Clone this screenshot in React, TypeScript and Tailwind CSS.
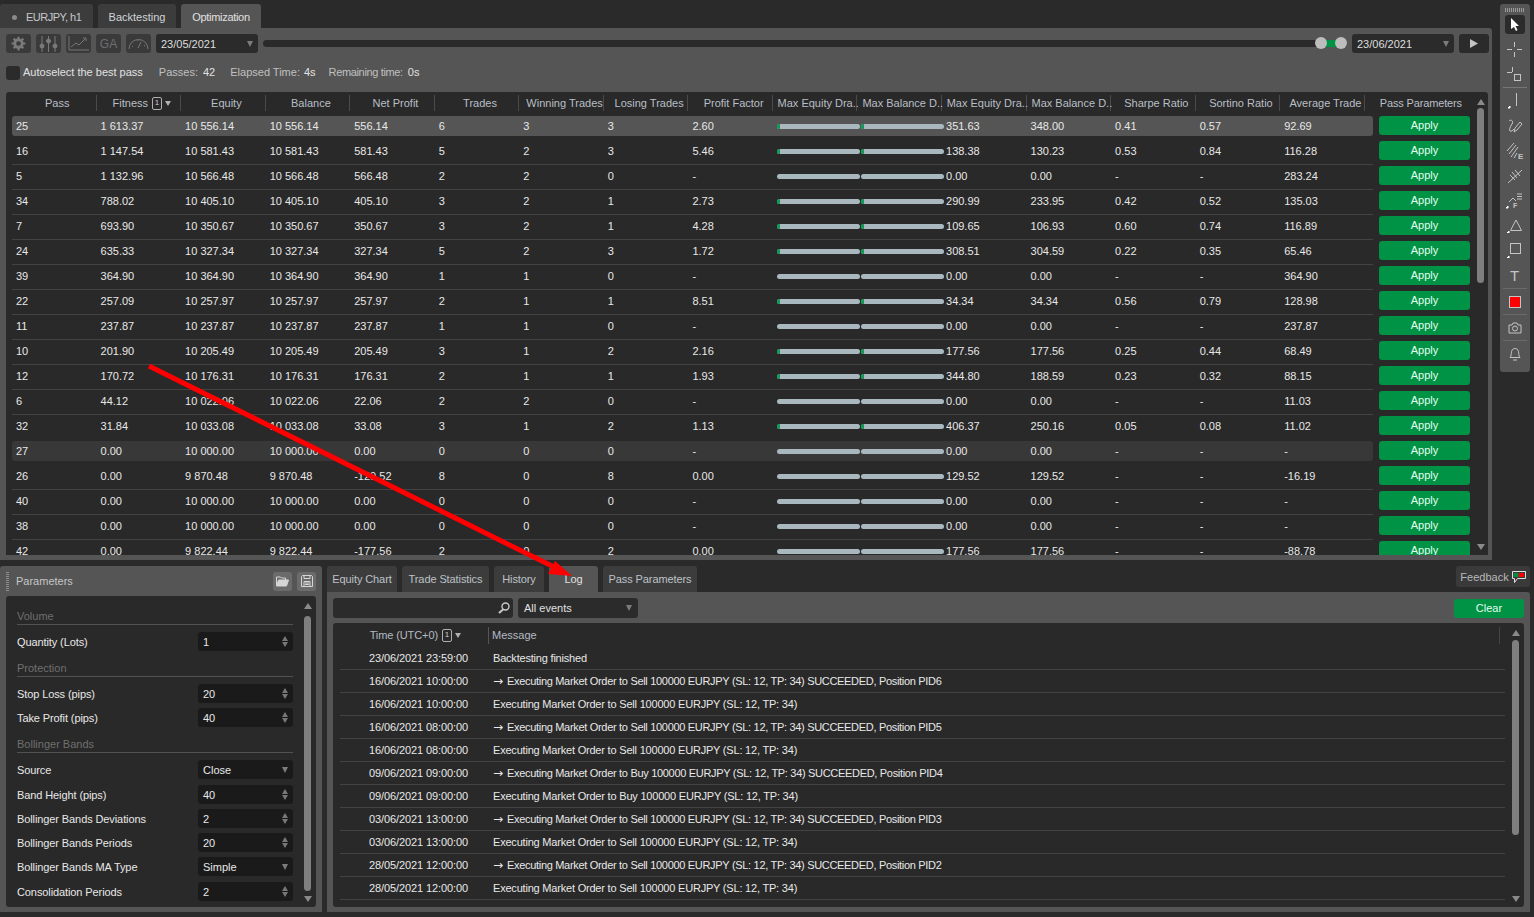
import type { ReactNode } from "react";

type PassRow = [string, string, string, string, string, string, string, string, string, boolean, string, string, string, string];

const passes: PassRow[] = [
  ["25", "1 613.37", "10 556.14", "556.14", "6", "3", "3", "2.60", "351.63", true, "348.00", "0.41", "0.57", "92.69"],
  ["16", "1 147.54", "10 581.43", "581.43", "5", "2", "3", "5.46", "138.38", true, "130.23", "0.53", "0.84", "116.28"],
  ["5", "1 132.96", "10 566.48", "566.48", "2", "2", "0", "-", "0.00", false, "0.00", "-", "-", "283.24"],
  ["34", "788.02", "10 405.10", "405.10", "3", "2", "1", "2.73", "290.99", true, "233.95", "0.42", "0.52", "135.03"],
  ["7", "693.90", "10 350.67", "350.67", "3", "2", "1", "4.28", "109.65", true, "106.93", "0.60", "0.74", "116.89"],
  ["24", "635.33", "10 327.34", "327.34", "5", "2", "3", "1.72", "308.51", true, "304.59", "0.22", "0.35", "65.46"],
  ["39", "364.90", "10 364.90", "364.90", "1", "1", "0", "-", "0.00", false, "0.00", "-", "-", "364.90"],
  ["22", "257.09", "10 257.97", "257.97", "2", "1", "1", "8.51", "34.34", true, "34.34", "0.56", "0.79", "128.98"],
  ["11", "237.87", "10 237.87", "237.87", "1", "1", "0", "-", "0.00", false, "0.00", "-", "-", "237.87"],
  ["10", "201.90", "10 205.49", "205.49", "3", "1", "2", "2.16", "177.56", true, "177.56", "0.25", "0.44", "68.49"],
  ["12", "170.72", "10 176.31", "176.31", "2", "1", "1", "1.93", "344.80", true, "188.59", "0.23", "0.32", "88.15"],
  ["6", "44.12", "10 022.06", "22.06", "2", "2", "0", "-", "0.00", false, "0.00", "-", "-", "11.03"],
  ["32", "31.84", "10 033.08", "33.08", "3", "1", "2", "1.13", "406.37", true, "250.16", "0.05", "0.08", "11.02"],
  ["27", "0.00", "10 000.00", "0.00", "0", "0", "0", "-", "0.00", false, "0.00", "-", "-", "-"],
  ["26", "0.00", "9 870.48", "-129.52", "8", "0", "8", "0.00", "129.52", false, "129.52", "-", "-", "-16.19"],
  ["40", "0.00", "10 000.00", "0.00", "0", "0", "0", "-", "0.00", false, "0.00", "-", "-", "-"],
  ["38", "0.00", "10 000.00", "0.00", "0", "0", "0", "-", "0.00", false, "0.00", "-", "-", "-"],
  ["42", "0.00", "9 822.44", "-177.56", "2", "0", "2", "0.00", "177.56", false, "177.56", "-", "-", "-88.78"],
];

const headers = [
  "Pass", "Fitness", "Equity", "Balance", "Net Profit", "Trades", "Winning Trades", "Losing Trades",
  "Profit Factor", "Max Equity Dra..", "Max Balance D..", "Max Equity Dra..", "Max Balance D..",
  "Sharpe Ratio", "Sortino Ratio", "Average Trade",
];

const logs = [
  ["23/06/2021 23:59:00", "Backtesting finished", false],
  ["16/06/2021 10:00:00", "Executing Market Order to Sell 100000 EURJPY (SL: 12, TP: 34) SUCCEEDED, Position PID6", true],
  ["16/06/2021 10:00:00", "Executing Market Order to Sell 100000 EURJPY (SL: 12, TP: 34)", false],
  ["16/06/2021 08:00:00", "Executing Market Order to Sell 100000 EURJPY (SL: 12, TP: 34) SUCCEEDED, Position PID5", true],
  ["16/06/2021 08:00:00", "Executing Market Order to Sell 100000 EURJPY (SL: 12, TP: 34)", false],
  ["09/06/2021 09:00:00", "Executing Market Order to Buy 100000 EURJPY (SL: 12, TP: 34) SUCCEEDED, Position PID4", true],
  ["09/06/2021 09:00:00", "Executing Market Order to Buy 100000 EURJPY (SL: 12, TP: 34)", false],
  ["03/06/2021 13:00:00", "Executing Market Order to Sell 100000 EURJPY (SL: 12, TP: 34) SUCCEEDED, Position PID3", true],
  ["03/06/2021 13:00:00", "Executing Market Order to Sell 100000 EURJPY (SL: 12, TP: 34)", false],
  ["28/05/2021 12:00:00", "Executing Market Order to Sell 100000 EURJPY (SL: 12, TP: 34) SUCCEEDED, Position PID2", true],
  ["28/05/2021 12:00:00", "Executing Market Order to Sell 100000 EURJPY (SL: 12, TP: 34)", false],
] as const;

function Cell({ children }: { children?: ReactNode }) {
  return <div className="w-[84.55px] shrink-0 truncate pl-[4px]">{children}</div>;
}

function Bar({ on }: { on: boolean }) {
  return (
    <div className="w-[84.55px] shrink-0 pl-[4px]">
      <div className="h-[5px] w-[83px] overflow-hidden rounded-full bg-[#a9b8bf]">
        {on && <div className="h-full w-[3px] bg-[#0d9a55]" />}
      </div>
    </div>
  );
}

function SortBadge() {
  return (
    <span className="ml-[4px] inline-flex items-center gap-[3px]">
      <span className="flex h-[13px] w-[10px] items-center justify-center rounded-[2px] border border-[#b0b0b0] text-[8px] text-[#cfcfcf]">1</span>
      <span className="h-0 w-0 border-x-[3px] border-t-[5px] border-x-transparent border-t-[#b0b0b0]" />
    </span>
  );
}

function Caret() {
  return <span className="h-0 w-0 border-x-[3px] border-t-[6px] border-x-transparent border-t-[#7c7c7c]" />;
}

function ScrollCol({ thumb, className }: { thumb: string; className: string }) {
  return (
    <div className={`flex shrink-0 flex-col items-center ${className}`}>
      <span className="mt-[3px] h-0 w-0 border-x-[4px] border-b-[6px] border-x-transparent border-b-[#8a8a8a]" />
      <div className={`w-[7px] rounded-full bg-[#7f7f7f] ${thumb}`} />
      <span className="mb-[3px] mt-auto h-0 w-0 border-x-[4px] border-t-[6px] border-x-transparent border-t-[#8a8a8a]" />
    </div>
  );
}

function ToolBtn({ children }: { children: ReactNode }) {
  return (
    <div className="flex h-[19px] w-[25px] shrink-0 items-center justify-center rounded-[3px] bg-[#3a3a3a] text-[#6e6e6e]">
      {children}
    </div>
  );
}

function ResultsPanel() {
  return (
    <div className="flex h-[532px] flex-col rounded-tr-[3px] bg-[#555555] pl-[6px] pr-[3px]">
      <div className="mt-[6px] flex h-[19px] items-center">
        <div className="flex gap-[5px]">
          <ToolBtn>
            <svg width="15" height="15" viewBox="0 0 24 24" fill="none" stroke="#7a7a7a">
              <circle cx="12" cy="12" r="6" strokeWidth="4.500" />
              <path d="M12 1v22M1 12h22M4.200 4.200l15.600 15.600M19.800 4.200L4.200 19.800" strokeWidth="3.500" strokeDasharray="5 12 5" />
            </svg>
          </ToolBtn>
          <ToolBtn>
            <svg width="21" height="16" viewBox="0 0 21 16" fill="#7a7a7a" stroke="#7a7a7a">
              <path d="M4 0v16M10.500 0v16M17 0v16" strokeWidth="1" />
              <circle cx="4" cy="10" r="2" />
              <circle cx="10.500" cy="5" r="2" />
              <circle cx="17" cy="10" r="2" />
            </svg>
          </ToolBtn>
          <ToolBtn>
            <svg width="21" height="15" viewBox="0 0 21 15" fill="none" stroke="#777">
              <path d="M1 0v14h20" />
              <path d="M3 11l5-4 3 2 6-6" />
              <path d="M15 2h3v3" />
            </svg>
          </ToolBtn>
          <ToolBtn>
            <span className="text-[12px] text-[#6e6e6e]">GA</span>
          </ToolBtn>
          <ToolBtn>
            <svg width="21" height="13" viewBox="0 0 21 13" fill="none" stroke="#777">
              <path d="M1 12a9.500 9.500 0 0 1 19 0" />
              <path d="M10 11l3-6M4 9l1 .7M16 9l1-.7M10 4V3" />
            </svg>
          </ToolBtn>
        </div>
        <div className="ml-[5px] flex h-[19px] w-[102px] shrink-0 items-center justify-between rounded-[3px] bg-[#2b2b2b] px-[5px] text-[#dedede]">
          <span className="pt-[1px]">23/05/2021</span>
          <Caret />
        </div>
        <div className="relative ml-[5px] h-[7px] flex-1 rounded-full bg-[#2a2a2a]">
          <div className="absolute left-[1058px] top-0 h-[7px] w-[20px] bg-[#009245]" />
          <div className="absolute left-[1052px] top-[-3px] h-[12px] w-[12px] rounded-full bg-[#bdbdbd]" />
          <div className="absolute left-[1072px] top-[-3px] h-[12px] w-[12px] rounded-full bg-[#bdbdbd]" />
        </div>
        <div className="ml-[5px] flex h-[19px] w-[102px] shrink-0 items-center justify-between rounded-[3px] bg-[#2b2b2b] px-[5px] text-[#dedede]">
          <span className="pt-[1px]">23/06/2021</span>
          <Caret />
        </div>
        <div className="ml-[5px] flex h-[19px] w-[30px] shrink-0 items-center justify-center rounded-[3px] bg-[#2b2b2b]">
          <svg width="8" height="9" viewBox="0 0 8 9" fill="#c4c4c4"><path d="M0 0l8 4.500-8 4.500z" /></svg>
        </div>
      </div>

      <div className="mt-[12px] flex h-[15px] items-center">
        <div className="h-[14px] w-[14px] rounded-[3px] bg-[#2b2b2b]" />
        <span className="ml-[3px] text-[#e2e2e2]">Autoselect the best pass</span>
        <span className="ml-[16px] text-[#c0c0c0]">Passes:</span>
        <span className="ml-[5px] text-[#e2e2e2]">42</span>
        <span className="ml-[15px] text-[#c0c0c0]">Elapsed Time:</span>
        <span className="ml-[4px] text-[#e2e2e2]">4s</span>
        <span className="ml-[13px] tracking-[-0.35px] text-[#c0c0c0]">Remaining time:</span>
        <span className="ml-[5px] text-[#e2e2e2]">0s</span>
      </div>

      <div className="mr-[1px] mt-[12px] flex h-[463px] overflow-hidden rounded-t-[3px] bg-[#292929]">
        <div className="min-w-0 flex-1 overflow-hidden pl-[6px]">
          <div className="flex h-[22px] items-center text-[#b9bfc6]">
            {headers.map((h, i) => (
              <div key={i} className="flex h-[16px] w-[84.55px] shrink-0 items-center justify-center whitespace-nowrap border-r border-[#4a4a4a] pl-[7px]">
                {h}
                {i === 1 && <SortBadge />}
              </div>
            ))}
            <div className="ml-[15px] whitespace-nowrap tracking-[-0.15px]">Pass Parameters</div>
          </div>
          {passes.map((p, i) => {
            const active = i === 0;
            const soft = i === 13;
            const noLine = i === 0 || i === 1 || i === 13 || i === 14;
            return (
              <div key={i} className="flex h-[25px] items-start text-[#e8e8e8]">
                <div className={`h-[25px] w-[1361px] shrink-0 ${noLine ? "" : "border-t border-[#434343]"}`}>
                  <div className={`flex h-[20px] items-center rounded-[3px] ${noLine ? "mt-[2px]" : "mt-[1px]"} ${active ? "bg-[#555555]" : soft ? "bg-[#383838]" : ""}`}>
                    <Cell>{p[0]}</Cell>
                    <Cell>{p[1]}</Cell>
                    <Cell>{p[2]}</Cell>
                    <Cell>{p[2]}</Cell>
                    <Cell>{p[3]}</Cell>
                    <Cell>{p[4]}</Cell>
                    <Cell>{p[5]}</Cell>
                    <Cell>{p[6]}</Cell>
                    <Cell>{p[7]}</Cell>
                    <Bar on={p[9]} />
                    <Bar on={p[9]} />
                    <Cell>{p[8]}</Cell>
                    <Cell>{p[10]}</Cell>
                    <Cell>{p[11]}</Cell>
                    <Cell>{p[12]}</Cell>
                    <Cell>{p[13]}</Cell>
                  </div>
                </div>
                <button className="ml-[6px] mt-[2px] flex h-[19px] w-[91px] shrink-0 items-center justify-center rounded-[3px] bg-[#009245] text-[#e4fff0]">
                  Apply
                </button>
              </div>
            );
          })}
        </div>
        <ScrollCol className="w-[18px] pb-[2px] pl-[3px] pt-[4px]" thumb="h-[175px] mt-[3px]" />
      </div>
    </div>
  );
}

function SideTool({ children }: { children: ReactNode }) {
  return <div className="flex h-[25px] w-full items-center justify-center text-[#c4c4c4]">{children}</div>;
}

function SideBar() {
  return (
    <div className="ml-[8px] mt-[4px] flex h-[368px] w-[30px] flex-col items-center rounded-[3px] bg-[#555555] pr-[1px]">
      <div className="mt-[4px] h-[4px] w-[20px] bg-[repeating-linear-gradient(90deg,#9a9a9a_0_1px,transparent_1px_2px)]" />
      <div className="mt-[3px] flex h-[19px] w-[20px] items-center justify-center rounded-[3px] bg-[#2b2b2b]">
        <svg width="10" height="13" viewBox="0 0 10 13" fill="#fff"><path d="M1 0l8 8H5.500l2 4-1.500 1-2-4L1 11z" /></svg>
      </div>
      <div className="mt-[3px] w-full">
        <SideTool>
          <svg width="15" height="15" viewBox="0 0 15 15" stroke="currentColor"><path d="M7.500 0v5M7.500 10v5M0 7.500h5M10 7.500h5" /></svg>
        </SideTool>
        <SideTool>
          <svg width="16" height="15" viewBox="0 0 16 15" fill="none" stroke="currentColor"><path d="M5.500 0v5M0 5.500h5" /><rect x="7.500" y="7.500" width="6" height="6" /></svg>
        </SideTool>
      </div>
      <div className="h-[1px] w-[24px] bg-[#777]" />
      <SideTool>
        <svg width="16" height="16" viewBox="0 0 16 16" fill="none" stroke="currentColor"><path d="M9.500 0v13" /><path d="M1 15h2v-2z" fill="#fff" stroke="#fff" /></svg>
      </SideTool>
      <SideTool>
        <svg width="16" height="16" viewBox="0 0 16 16" fill="none" stroke="currentColor"><path d="M2 3c2-2 5 0 3 3s-3 6-2 7 3-1 4-2" /><path d="M7 14l1-4 5-6 2 2-5 6z" /></svg>
      </SideTool>
      <SideTool>
        <svg width="18" height="18" viewBox="0 0 18 18" fill="none" stroke="currentColor"><path d="M1 9l7-8M3 12l7-9M5 15l7-10M8 16l3-5" /><text x="12" y="17" fontSize="8" fontWeight="700" fill="currentColor" stroke="none">E</text></svg>
      </SideTool>
      <SideTool>
        <svg width="16" height="16" viewBox="0 0 16 16" fill="none" stroke="currentColor"><path d="M1 15L15 2M5 4l5 6M8 2l5 6M3 7l5 5" /></svg>
      </SideTool>
      <SideTool>
        <svg width="17" height="16" viewBox="0 0 17 16" fill="none" stroke="currentColor"><path d="M3 9l4-4 3 3M11 1h5M11 3.500h5M11 6h5" /><text x="7" y="15" fontSize="7" fontWeight="700" fill="currentColor" stroke="none">F</text><path d="M0 15h2v-2z" fill="#fff" stroke="#fff" /></svg>
      </SideTool>
      <SideTool>
        <svg width="16" height="14" viewBox="0 0 16 14" fill="none" stroke="currentColor"><path d="M9 1l5.500 10.500h-11z" /><path d="M0 14h2v-2z" fill="#fff" stroke="#fff" /></svg>
      </SideTool>
      <SideTool>
        <svg width="15" height="15" viewBox="0 0 15 15" fill="none" stroke="currentColor"><rect x="3.500" y="0.500" width="10" height="10" /><path d="M0 15h2v-2z" fill="#fff" stroke="#fff" /></svg>
      </SideTool>
      <SideTool>
        <span className="font-['Liberation_Sans',sans-serif] text-[15px] font-light leading-none">T</span>
      </SideTool>
      <div className="h-[1px] w-[24px] bg-[#6a6a6a]" />
      <SideTool>
        <div className="h-[12px] w-[12px] border border-[#c4c4c4] bg-[#ff0000]" />
      </SideTool>
      <div className="h-[1px] w-[24px] bg-[#6a6a6a]" />
      <SideTool>
        <svg width="14" height="12" viewBox="0 0 14 12" fill="none" stroke="currentColor"><path d="M1 3h3l1-2h4l1 2h3v8H1z" /><circle cx="7" cy="6.500" r="2.500" /></svg>
      </SideTool>
      <div className="h-[1px] w-[24px] bg-[#6a6a6a]" />
      <SideTool>
        <svg width="12" height="14" viewBox="0 0 12 14" fill="none" stroke="currentColor"><path d="M1 10.500c1.500-1.500 1-3.500 1.500-6S5 1.500 6 1.500s3 .5 3.500 3 0 4.500 1.500 6z" /><path d="M4 13h4" /></svg>
      </SideTool>
    </div>
  );
}

function Section({ label, gap }: { label: string; gap: string }) {
  return <div className={`h-[19px] border-b border-[#525252] pt-[5px] text-[#6f6f6f] ${gap}`}>{label}</div>;
}

function Field({ label, value, select, gap }: { label: string; value: string; select?: boolean; gap: string }) {
  return (
    <div className={`flex items-center justify-between text-[#e8e8e8] ${gap}`}>
      <span className="pt-[2px] tracking-[-0.1px]">{label}</span>
      <div className="flex h-[19px] w-[95px] items-center justify-between rounded-[3px] bg-[#1a1a1a] px-[5px]">
        <span className="pt-[2px]">{value}</span>
        {select ? (
          <Caret />
        ) : (
          <span className="flex flex-col gap-[1px]">
            <span className="h-0 w-0 border-x-[3px] border-b-[5px] border-x-transparent border-b-[#777]" />
            <span className="h-0 w-0 border-x-[3px] border-t-[5px] border-x-transparent border-t-[#777]" />
          </span>
        )}
      </div>
    </div>
  );
}

function ParametersPanel() {
  return (
    <div className="flex h-[346px] w-[322px] shrink-0 flex-col rounded-t-[3px] bg-[#555555] px-[6px]">
      <div className="flex h-[30px] shrink-0 items-center">
        <div className="h-[19px] w-[3px] bg-[repeating-linear-gradient(0deg,#8c8c8c_0_1px,transparent_1px_2px)]" />
        <span className="ml-[7px] text-[#c6c6c6]">Parameters</span>
        <div className="ml-auto flex gap-[5px]">
          <div className="flex h-[19px] w-[19px] items-center justify-center rounded-[3px] bg-[#6b6b6b]">
            <svg width="13" height="11" viewBox="0 0 13 11" fill="none" stroke="#d6d6d6"><path d="M.5 10V1h4l1 1h4v2" /><path d="M.5 10l2-6h10l-2 6z" fill="#d6d6d6" /></svg>
          </div>
          <div className="flex h-[19px] w-[19px] items-center justify-center rounded-[3px] bg-[#6b6b6b]">
            <svg width="12" height="12" viewBox="0 0 12 12" fill="none" stroke="#d6d6d6"><path d="M.5 1.500l1-1h9l1 1v10h-11z" /><path d="M3 .5v3h6v-3M3 11.500v-5h6v5M4 8h4M4 9.500h4" /></svg>
          </div>
        </div>
      </div>
      <div className="flex h-[311px] shrink-0 rounded-[3px] bg-[#292929]">
        <div className="w-[287px] shrink-0 pl-[11px] pt-[10px]">
          <Section label="Volume" gap="" />
          <Field label="Quantity (Lots)" value="1" gap="mt-[7px]" />
          <Section label="Protection" gap="mt-[7px]" />
          <Field label="Stop Loss (pips)" value="20" gap="mt-[7px]" />
          <Field label="Take Profit (pips)" value="40" gap="mt-[5px]" />
          <Section label="Bollinger Bands" gap="mt-[7px]" />
          <Field label="Source" value="Close" select gap="mt-[7px]" />
          <Field label="Band Height (pips)" value="40" gap="mt-[6px]" />
          <Field label="Bollinger Bands Deviations" value="2" gap="mt-[5px]" />
          <Field label="Bollinger Bands Periods" value="20" gap="mt-[5px]" />
          <Field label="Bollinger Bands MA Type" value="Simple" select gap="mt-[5px]" />
          <Field label="Consolidation Periods" value="2" gap="mt-[6px]" />
        </div>
        <ScrollCol className="w-[23px] pb-[2px] pl-[6px] pt-[4px]" thumb="h-[275px] mt-[7px]" />
      </div>
    </div>
  );
}

function BottomTab({ label, w, active }: { label: string; w: string; active?: boolean }) {
  return (
    <div className={`flex h-[26px] items-center justify-center rounded-t-[3px] tracking-[-0.1px] ${w} ${active ? "bg-[#555555] text-[#e0e0e0]" : "bg-[#3c3c3c] text-[#bcc2c8]"}`}>
      {label}
    </div>
  );
}

function LogPanel() {
  return (
    <div className="ml-[5px] flex h-[346px] min-w-0 flex-1 flex-col">
      <div className="flex h-[26px] shrink-0 items-start">
        <div className="flex gap-[5px]">
          <BottomTab label="Equity Chart" w="w-[70px]" />
          <BottomTab label="Trade Statistics" w="w-[87px]" />
          <BottomTab label="History" w="w-[50px]" />
          <BottomTab label="Log" w="w-[49px]" active />
          <BottomTab label="Pass Parameters" w="w-[94px]" />
        </div>
        <div className="ml-auto flex h-[21px] w-[74px] items-center justify-center gap-[3px] rounded-[3px] bg-[#3a3a3a] pt-[1px] text-[#b8b8b8]">
          Feedback
          <svg width="14" height="13" viewBox="0 0 14 13" fill="none">
            <path d="M.5.500h13v7h-8l-3 4v-4h-2z" stroke="#e0e0e0" />
            <rect x="1.500" y="2" width="5" height="4" fill="#0a8a3c" />
            <rect x="7" y="2" width="5" height="4" fill="#ff0000" />
          </svg>
        </div>
      </div>
      <div className="flex h-[320px] flex-col rounded-tr-[3px] bg-[#555555] px-[6px]">
        <div className="mt-[6px] flex h-[20px] shrink-0 items-center">
          <div className="flex h-[20px] w-[180px] items-center justify-end rounded-[3px] bg-[#2b2b2b] pr-[3px]">
            <svg width="12" height="12" viewBox="0 0 12 12" fill="none" stroke="#c8c8c8" strokeWidth="1.400"><circle cx="7.500" cy="4.500" r="3.500" /><path d="M5 7.500L1 11" strokeWidth="2" /></svg>
          </div>
          <div className="ml-[5px] flex h-[20px] w-[120px] items-center justify-between rounded-[3px] bg-[#2b2b2b] px-[6px] text-[#e0e0e0]">
            All events
            <Caret />
          </div>
          <button className="ml-auto flex h-[19px] w-[70px] items-center justify-center rounded-[3px] bg-[#009245] text-[#e4fff0]">Clear</button>
        </div>
        <div className="mt-[5px] flex h-[284px] shrink-0 rounded-[3px] bg-[#292929]">
          <div className="min-w-0 flex-1 pl-[7px]">
            <div className="flex h-[24px] items-center text-[#b4bac2]">
              <div className="flex h-[17px] w-[149px] shrink-0 items-center justify-end border-r border-[#555] pr-[27px] tracking-[-0.1px]">
                Time (UTC+0)
                <SortBadge />
              </div>
              <span className="ml-[3px]">Message</span>
              <div className="ml-auto mr-[5px] h-[17px] w-px bg-[#444]" />
            </div>
            {logs.map(([time, msg, child], i) => (
              <div key={i} className="flex h-[23px] items-center border-b border-[#434343] text-[#e8e8e8]">
                <div className="w-[128px] shrink-0 text-right tracking-[-0.1px]">{time}</div>
                <div className="ml-[25px] flex items-center whitespace-nowrap">
                  {child ? (
                    <>
                      <span className="w-[14px] shrink-0 font-['DejaVu_Sans',sans-serif] text-[12px]">→</span>
                      <span className="tracking-[-0.31px]">{msg}</span>
                    </>
                  ) : (
                    <span className="tracking-[-0.2px]">{msg}</span>
                  )}
                </div>
              </div>
            ))}
          </div>
          <ScrollCol className="w-[19px] pb-[2px] pl-[2px] pt-[4px]" thumb="h-[195px] mt-[4px]" />
        </div>
      </div>
    </div>
  );
}

export default function App() {
  return (
    <div className="relative flex h-[917px] w-[1534px] flex-col overflow-hidden bg-[#2a2a2a] font-['Liberation_Sans',Arial,sans-serif] text-[11px] leading-none">
      <div className="flex h-[566px] shrink-0 items-start">
        <div className="w-[1492px] shrink-0">
          <div className="flex h-[28px] items-end">
            <div className="flex h-[24px] w-[93px] items-center rounded-t-[3px] bg-[#3c3c3c] pl-[12px] pt-[2px] tracking-[-0.5px] text-[#c4c8cc]">
              <span className="mr-[9px] h-[5px] w-[5px] rounded-full bg-[#8a8a8a]" />
              EURJPY, h1
            </div>
            <div className="ml-[5px] flex h-[24px] w-[78px] items-center justify-center rounded-t-[3px] bg-[#3c3c3c] pt-[2px] text-[#d0d4d8]">Backtesting</div>
            <div className="ml-[5px] flex h-[24px] w-[80px] items-center justify-center rounded-t-[3px] bg-[#555555] pt-[2px] tracking-[-0.3px] text-[#e0e0e0]">Optimization</div>
          </div>
          <ResultsPanel />
        </div>
        <SideBar />
      </div>
      <div className="flex shrink-0 pr-[4px]">
        <ParametersPanel />
        <LogPanel />
      </div>

      {/* red arrow annotation drawn over the screenshot */}
      <svg className="pointer-events-none absolute left-0 top-0" width="1534" height="917">
        <line x1="149" y1="366" x2="556" y2="568" stroke="#ff0000" strokeWidth="5" />
        <polygon points="555,561 548,574 572,576" fill="#ff0000" />
      </svg>
    </div>
  );
}
